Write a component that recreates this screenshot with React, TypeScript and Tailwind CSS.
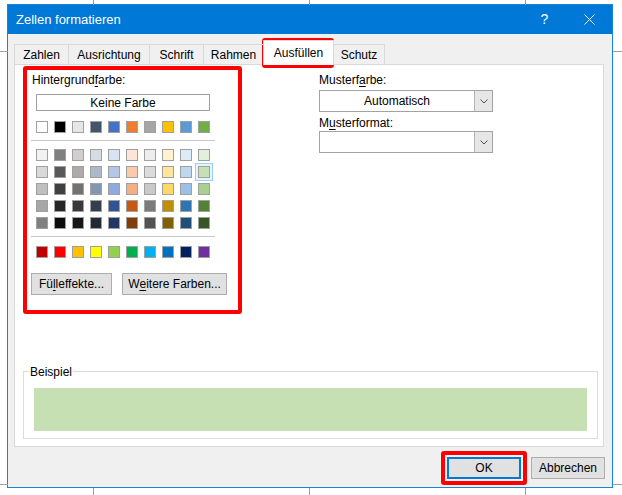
import React from "react";

const themeRow = ["#FFFFFF", "#000000", "#E7E6E6", "#44546A", "#4472C4", "#ED7D31", "#A5A5A5", "#FFC000", "#5B9BD5", "#70AD47"];
const tintRows = [
  ["#F2F2F2", "#7F7F7F", "#D0CECE", "#D6DCE4", "#D9E1F2", "#FCE4D6", "#EDEDED", "#FFF2CC", "#DDEBF7", "#E2EFDA"],
  ["#D9D9D9", "#595959", "#AEAAAA", "#ACB9CA", "#B4C6E7", "#F8CBAD", "#DBDBDB", "#FFE699", "#BDD7EE", "#C6E0B4"],
  ["#BFBFBF", "#404040", "#757171", "#8497B0", "#8EA9DB", "#F4B084", "#C9C9C9", "#FFD966", "#9BC2E6", "#A9D08E"],
  ["#A6A6A6", "#262626", "#3A3838", "#333F4F", "#305496", "#C65911", "#7B7B7B", "#BF8F00", "#2F75B5", "#548235"],
  ["#808080", "#0D0D0D", "#161616", "#222B35", "#203764", "#833C0C", "#525252", "#806000", "#1F4E78", "#375623"],
];
const standardRow = ["#C00000", "#FF0000", "#FFC000", "#FFFF00", "#92D050", "#00B050", "#00B0F0", "#0070C0", "#002060", "#7030A0"];

function Swatch({ c, selected }: { c: string; selected?: boolean }) {
  return (
    <div
      className={
        selected
          ? "w-[12px] h-[12px] border border-[#a0a0a0] shadow-[0_0_0_2px_#e5f3ff,0_0_0_3px_#99d1ff]"
          : "w-[12px] h-[12px] border border-[#a0a0a0]"
      }
      style={{ backgroundColor: c }}
    />
  );
}

function SwatchRow({ colors, selectedIndex }: { colors: string[]; selectedIndex?: number }) {
  return (
    <div className="flex gap-[6px]">
      {colors.map((c, i) => (
        <Swatch key={i} c={c} selected={i === selectedIndex} />
      ))}
    </div>
  );
}

function Chevron() {
  return (
    <svg width="8" height="5" viewBox="0 0 8 5">
      <polyline points="0.5,0.5 4,4 7.5,0.5" fill="none" stroke="#4d4d4d" strokeWidth="1" />
    </svg>
  );
}

function SelectBox({ value }: { value?: string }) {
  return (
    <div className="h-[22px] w-[174px] border border-[#a3a3a3] bg-white flex">
      <div className="flex-1 flex items-center justify-center leading-none">{value}</div>
      <div className="w-[18px] bg-[#e6e6e6] border-l border-[#b4b4b4] flex items-center justify-center">
        <Chevron />
      </div>
    </div>
  );
}

function Btn({ w, children, ok }: { w: string; children: React.ReactNode; ok?: boolean }) {
  return (
    <div
      className={
        (ok ? "border-2 border-[#0078d7] " : "border border-[#adadad] ") +
        "h-[22px] bg-[#e1e1e1] flex items-center justify-center leading-none " +
        w
      }
    >
      {children}
    </div>
  );
}

export default function App() {
  return (
    <div className="relative w-[622px] h-[495px] bg-white overflow-hidden font-['Liberation_Sans',Arial,sans-serif] text-[12px] text-black">
      {/* spreadsheet gridlines behind the dialog */}
      <div className="absolute left-[93px] top-0 w-px h-[5px] bg-[#a0a0a0]" />
      <div className="absolute left-[309px] top-0 w-px h-[5px] bg-[#a0a0a0]" />
      <div className="absolute left-[525px] top-0 w-px h-[5px] bg-[#a0a0a0]" />
      <div className="absolute left-[93px] top-[488px] w-px h-[7px] bg-[#a0a0a0]" />
      <div className="absolute left-[309px] top-[488px] w-px h-[7px] bg-[#a0a0a0]" />
      <div className="absolute left-[525px] top-[488px] w-px h-[7px] bg-[#a0a0a0]" />
      <div className="absolute left-0 top-[51px] w-[8px] h-px bg-[#a0a0a0]" />
      <div className="absolute left-[613px] top-[51px] w-[9px] h-px bg-[#a0a0a0]" />
      <div className="absolute left-0 top-[484px] w-[8px] h-px bg-[#a0a0a0]" />
      <div className="absolute left-[613px] top-[484px] w-[9px] h-px bg-[#a0a0a0]" />

      <div className="pl-[7px] pt-[4px]">
        <div className="w-[606px] h-[484px] border border-[#1883d7] bg-[#f0f0f0] flex flex-col">
          {/* title bar */}
          <div className="h-[29px] bg-[#0078d7] flex items-center text-white">
            <span className="pl-[8px] text-[13px]">Zellen formatieren</span>
            <div className="ml-auto flex">
              <div className="w-[45px] h-[29px] flex items-center justify-center text-[14px]">?</div>
              <div className="w-[45px] h-[29px] flex items-center justify-center">
                <svg width="11" height="11" viewBox="0 0 11 11">
                  <line x1="0.5" y1="0.5" x2="10.5" y2="10.5" stroke="white" strokeWidth="1" />
                  <line x1="10.5" y1="0.5" x2="0.5" y2="10.5" stroke="white" strokeWidth="1" />
                </svg>
              </div>
            </div>
          </div>

          <div className="flex-1 flex flex-col pl-[6px] pr-[8px]">
            {/* tabs */}
            <div className="mt-[6px] h-[24px] flex items-end relative z-10">
              <div className="w-[54px] h-[20px] border-l border-t border-[#d9d9d9] flex items-center justify-center">Zahlen</div>
              <div className="w-[81px] h-[20px] border-l border-t border-[#d9d9d9] flex items-center justify-center">Ausrichtung</div>
              <div className="w-[54px] h-[20px] border-l border-t border-[#d9d9d9] flex items-center justify-center">Schrift</div>
              <div className="w-[60px] h-[20px] border-l border-t border-[#d9d9d9] flex items-center justify-center">Rahmen</div>
              <div className="w-[71px] h-[25px] -mb-px border-l border-r border-t border-[#d9d9d9] bg-white flex justify-center pt-[4px] leading-[16px]">Ausfüllen</div>
              <div className="w-[51px] h-[20px] border-r border-t border-[#d9d9d9] flex items-center justify-center">Schutz</div>
            </div>

            {/* panel */}
            <div className="h-[383px] border border-[#d9d9d9] bg-white flex flex-col">
              <div className="flex pt-[7px] pl-[16px]">
                <div className="w-[288px] flex flex-col">
                  <div className="pl-[1px] leading-[16px]">
                    Hintergrund<span className="underline underline-offset-2">f</span>arbe:
                  </div>
                  <div className="mt-[6px] ml-[5px] w-[174px] h-[17px] border border-[#a0a0a0] flex items-center justify-center leading-none">
                    Keine Farbe
                  </div>
                  <div className="mt-[10px] ml-[5px]">
                    <SwatchRow colors={themeRow} />
                  </div>
                  <div className="mt-[7px] w-[184px] h-px bg-[#c8c8c8]" />
                  <div className="mt-[8px] ml-[5px] flex flex-col gap-[5px]">
                    {tintRows.map((r, i) => (
                      <SwatchRow key={i} colors={r} selectedIndex={i === 1 ? 9 : undefined} />
                    ))}
                  </div>
                  <div className="mt-[7px] w-[184px] h-px bg-[#c8c8c8]" />
                  <div className="mt-[9px] ml-[5px]">
                    <SwatchRow colors={standardRow} />
                  </div>
                  <div className="mt-[15px] flex gap-[10px]">
                    <Btn w="w-[81px]">
                      Fü<span className="underline underline-offset-2">l</span>leffekte...
                    </Btn>
                    <Btn w="w-[105px]">
                      W<span className="underline underline-offset-2">e</span>itere Farben...
                    </Btn>
                  </div>
                </div>

                <div className="w-[174px] flex flex-col">
                  <div className="leading-[16px]">
                    Musterf<span className="underline underline-offset-2">a</span>rbe:
                  </div>
                  <div className="mt-[2px]">
                    <SelectBox value="Automatisch" />
                  </div>
                  <div className="mt-[3px] leading-[16px]">
                    M<span className="underline underline-offset-2">u</span>sterformat:
                  </div>
                  <SelectBox />
                </div>
              </div>

              {/* Beispiel */}
              <div className="mt-auto mb-[7px] ml-[8px] mr-[5px] h-[68px] border border-[#dcdcdc] relative">
                <span className="absolute left-[5px] -top-[8px] bg-white px-[1px] leading-[16px]">Beispiel</span>
                <div className="mt-[16px] mx-[10px] h-[43px] bg-[#c6e0b4]" />
              </div>
            </div>

            {/* buttons */}
            <div className="mt-[10px] -mr-px flex justify-end gap-[10px]">
              <Btn w="w-[74px]" ok>
                OK
              </Btn>
              <Btn w="w-[74px]">Abbrechen</Btn>
            </div>
          </div>
        </div>
      </div>

      {/* red annotation boxes */}
      <div className="absolute left-[262px] top-[38px] w-[72px] h-[30px] border-[4px] border-[#ff0000] rounded-[3px]" />
      <div className="absolute left-[23px] top-[66px] w-[219px] h-[248px] border-[4px] border-[#ff0000] rounded-[3px]" />
      <div className="absolute left-[441px] top-[451px] w-[86px] h-[34px] border-[4px] border-[#ff0000] rounded-[3px]" />
    </div>
  );
}
